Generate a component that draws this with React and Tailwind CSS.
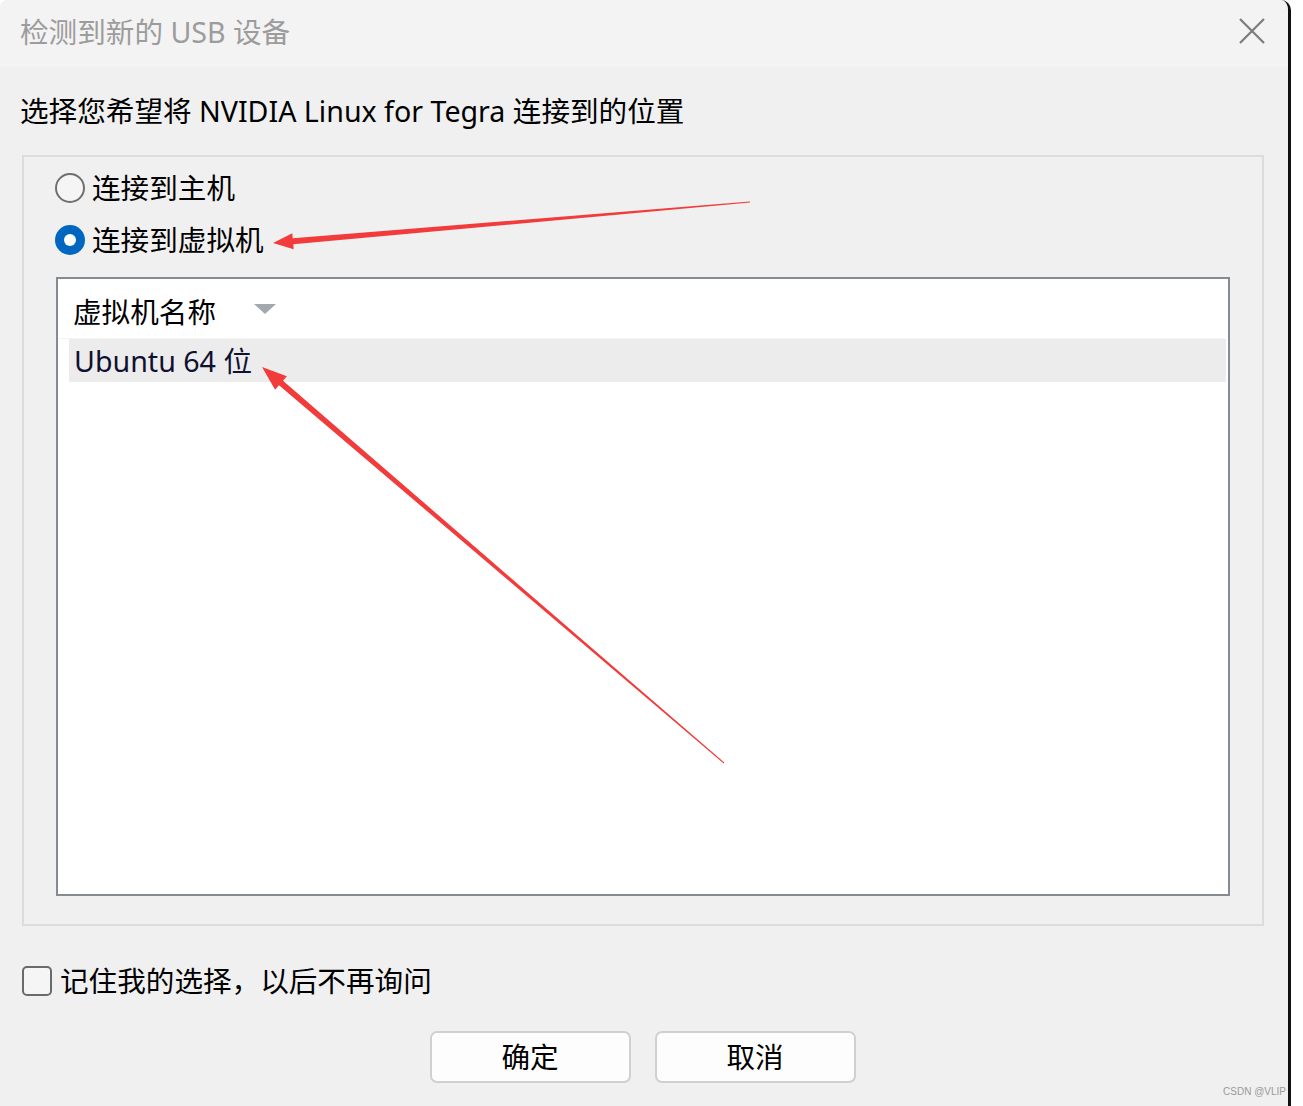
import React from "react";

const F = { fontFamily: '"Noto Sans", "Noto Sans CJK SC", sans-serif' };

export default function App() {
  return (
    <div className="relative w-[1303px] h-[1106px] bg-white overflow-hidden" style={F}>
      <div className="relative w-[1291px] h-[1112px] bg-[#f0f0f0] border-r-[3px] border-[#111] rounded-tr-[10px] rounded-tl-[8px] overflow-hidden flex flex-col">
        {/* title bar */}
        <div className="h-[67px] bg-[#f3f3f3] flex items-center justify-between pl-[20px] pr-[22px] shrink-0">
          <div className="text-[28.6px] leading-[36px] text-[#9c9c9c] -mt-[4px]">检测到新的 USB 设备</div>
          <svg width="28" height="28" viewBox="0 0 28 28" className="-mt-[6px]">
            <path d="M2 2 L26 26 M26 2 L2 26" stroke="#7c7c7c" strokeWidth="2.2" fill="none" />
          </svg>
        </div>
        {/* body */}
        <div className="flex flex-col pt-[26px]">
          <div className="pl-[20px] text-[28.6px] leading-[36px] text-black">
            选择您希望将 NVIDIA Linux for Tegra 连接到的位置
          </div>
          {/* group box */}
          <div className="mt-[26px] ml-[22px] w-[1242px] h-[771px] border-2 border-[#dcdcdc] flex flex-col pt-[13px] pl-[31px] pr-[32px]">
            <div className="flex items-center h-[36px] gap-[7px]">
              <div className="w-[30px] h-[30px] rounded-full border-2 border-[#6f6f6f] bg-[#f5f5f5]" />
              <span className="text-[28.6px] leading-[36px] text-black">连接到主机</span>
            </div>
            <div className="flex items-center h-[36px] gap-[7px] mt-[16px]">
              <div className="w-[30px] h-[30px] rounded-full bg-[#0067c0] flex items-center justify-center">
                <div className="w-[12px] h-[12px] rounded-full bg-white" />
              </div>
              <span className="text-[28.6px] leading-[36px] text-black">连接到虚拟机</span>
            </div>
            {/* list */}
            <div className="mt-[19px] ml-[1px] w-[1174px] h-[619px] border-2 border-[#868b92] bg-white flex flex-col">
              <div className="h-[60px] bg-white mr-[4px] flex items-center pl-[15px] pt-[6px] border-b border-[#f3f3f3]">
                <span className="text-[28.6px] leading-[36px] text-black">虚拟机名称</span>
                <svg width="24" height="12" viewBox="0 0 24 12" className="ml-[37px] -mt-[6px]">
                  <path d="M1 1 L23 1 L12 11 Z" fill="#a2a8ae" />
                </svg>
              </div>
              <div className="h-[43px] ml-[11px] mr-[2px] bg-[#ececec] flex items-center pl-[5px]">
                <span className="text-[28.6px] leading-[36px] text-[#101030]">Ubuntu 64 位</span>
              </div>
            </div>
          </div>
          {/* checkbox */}
          <div className="mt-[37px] ml-[22px] flex items-center h-[36px] gap-[8px]">
            <div className="w-[30px] h-[30px] rounded-[5px] border-2 border-[#6a6a6a] bg-[#f5f5f5]" />
            <span className="text-[28.6px] leading-[36px] text-black">记住我的选择，以后不再询问</span>
          </div>
          {/* buttons */}
          <div className="mt-[32px] flex justify-center gap-[24px] pr-[3px]">
            <button className="w-[201px] h-[52px] bg-[#fdfdfd] border-2 border-[#d0d0d0] rounded-[7px] text-[28.6px] leading-[36px] text-black flex items-center justify-center">
              确定
            </button>
            <button className="w-[201px] h-[52px] bg-[#fdfdfd] border-2 border-[#d0d0d0] rounded-[7px] text-[28.6px] leading-[36px] text-black flex items-center justify-center">
              取消
            </button>
          </div>
        </div>
        <div className="absolute right-[2px] bottom-[14px] text-[10px] leading-[12px] text-[#9a9a9a]" style={{ fontFamily: '"Liberation Sans", sans-serif' }}>
          CSDN @VLIP
        </div>
      </div>
      {/* annotation arrows */}
      <svg className="absolute left-0 top-0 pointer-events-none" width="1303" height="1106" viewBox="0 0 1303 1106">
        <polygon points="273,243 292.3,233.3 292.7,238.3 750,201.5 750,202.5 293.3,244.3 293.7,249.3" fill="#f23c3c" />
        <polygon points="262,367 286.9,376.2 283,380.7 724.3,762.6 723.7,763.4 279,385.3 275.1,389.8" fill="#f23c3c" />
      </svg>
    </div>
  );
}
